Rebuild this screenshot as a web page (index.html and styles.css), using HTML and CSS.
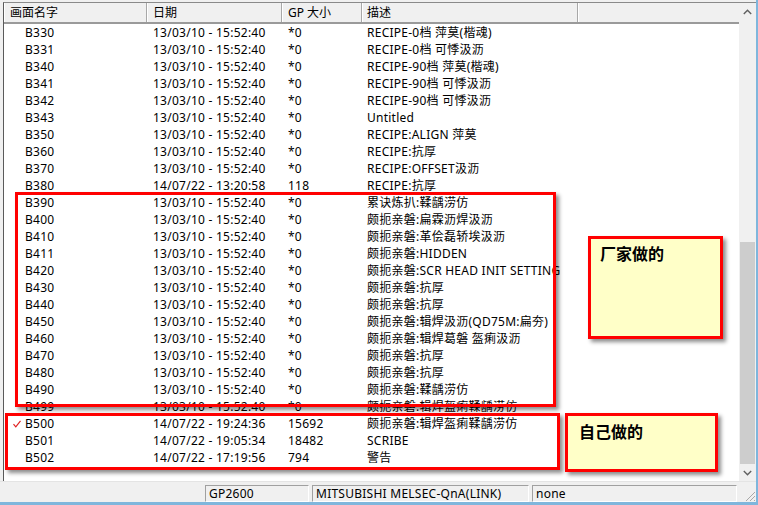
FILE: index.html
```html
<!DOCTYPE html>
<html lang="zh-CN">

<head>
    <meta charset="UTF-8">
    <title>画面列表</title>
    <link rel="stylesheet" href="styles.css">
</head>

<body>
    <div class="app">
        <div class="listbox">
            <div class="list">
                <div class="head">
                    <span>画面名字</span>
                    <span>日期</span>
                    <span>GP 大小</span>
                    <span>描述</span>
                    <span></span>
                </div>
                <div class="row"><span class="name">B330</span><span>13/03/10 - 15:52:40</span><span>*0</span><span class="desc">RECIPE-0档 萍莫(楷魂)</span></div>
                <div class="row"><span class="name">B331</span><span>13/03/10 - 15:52:40</span><span>*0</span><span class="desc">RECIPE-0档 可悸汲沥</span></div>
                <div class="row"><span class="name">B340</span><span>13/03/10 - 15:52:40</span><span>*0</span><span class="desc">RECIPE-90档 萍莫(楷魂)</span></div>
                <div class="row"><span class="name">B341</span><span>13/03/10 - 15:52:40</span><span>*0</span><span class="desc">RECIPE-90档 可悸汲沥</span></div>
                <div class="row"><span class="name">B342</span><span>13/03/10 - 15:52:40</span><span>*0</span><span class="desc">RECIPE-90档 可悸汲沥</span></div>
                <div class="row"><span class="name">B343</span><span>13/03/10 - 15:52:40</span><span>*0</span><span class="desc">Untitled</span></div>
                <div class="row"><span class="name">B350</span><span>13/03/10 - 15:52:40</span><span>*0</span><span class="desc">RECIPE:ALIGN 萍莫</span></div>
                <div class="row"><span class="name">B360</span><span>13/03/10 - 15:52:40</span><span>*0</span><span class="desc">RECIPE:抗厚</span></div>
                <div class="row"><span class="name">B370</span><span>13/03/10 - 15:52:40</span><span>*0</span><span class="desc">RECIPE:OFFSET汲沥</span></div>
                <div class="row"><span class="name">B380</span><span>14/07/22 - 13:20:58</span><span>118</span><span class="desc">RECIPE:抗厚</span></div>
                <div class="row"><span class="name">B390</span><span>13/03/10 - 15:52:40</span><span>*0</span><span class="desc">累诀炼扒:鞣龋涝仿</span></div>
                <div class="row"><span class="name">B400</span><span>13/03/10 - 15:52:40</span><span>*0</span><span class="desc">颇扼亲磐:扁霖沥焊汲沥</span></div>
                <div class="row"><span class="name">B410</span><span>13/03/10 - 15:52:40</span><span>*0</span><span class="desc">颇扼亲磐:革侩磊轿埃汲沥</span></div>
                <div class="row"><span class="name">B411</span><span>13/03/10 - 15:52:40</span><span>*0</span><span class="desc">颇扼亲磐:HIDDEN</span></div>
                <div class="row"><span class="name">B420</span><span>13/03/10 - 15:52:40</span><span>*0</span><span class="desc">颇扼亲磐:SCR HEAD INIT SETTING</span></div>
                <div class="row"><span class="name">B430</span><span>13/03/10 - 15:52:40</span><span>*0</span><span class="desc">颇扼亲磐:抗厚</span></div>
                <div class="row"><span class="name">B440</span><span>13/03/10 - 15:52:40</span><span>*0</span><span class="desc">颇扼亲磐:抗厚</span></div>
                <div class="row"><span class="name">B450</span><span>13/03/10 - 15:52:40</span><span>*0</span><span class="desc">颇扼亲磐:辑焊汲沥(QD75M:扁夯)</span></div>
                <div class="row"><span class="name">B460</span><span>13/03/10 - 15:52:40</span><span>*0</span><span class="desc">颇扼亲磐:辑焊葛磐 盔痢汲沥</span></div>
                <div class="row"><span class="name">B470</span><span>13/03/10 - 15:52:40</span><span>*0</span><span class="desc">颇扼亲磐:抗厚</span></div>
                <div class="row"><span class="name">B480</span><span>13/03/10 - 15:52:40</span><span>*0</span><span class="desc">颇扼亲磐:抗厚</span></div>
                <div class="row"><span class="name">B490</span><span>13/03/10 - 15:52:40</span><span>*0</span><span class="desc">颇扼亲磐:鞣龋涝仿</span></div>
                <div class="row"><span class="name">B499</span><span>13/03/10 - 15:52:40</span><span>*0</span><span class="desc">颇扼亲磐:辑焊盔痢鞣龋涝仿</span></div>
                <div class="row"><span class="name">
                        <svg class="check" width="8" height="8" viewBox="0 0 8 8"><path d="M0.5 4.2 L2.8 6.8 L7.5 0.8" fill="none" stroke="#e02020" stroke-width="1.2"/></svg>B500</span><span>14/07/22 - 19:24:36</span><span>15692</span><span class="desc">颇扼亲磐:辑焊盔痢鞣龋涝仿</span></div>
                <div class="row"><span class="name">B501</span><span>14/07/22 - 19:05:34</span><span>18482</span><span class="desc">SCRIBE</span></div>
                <div class="row"><span class="name">B502</span><span>14/07/22 - 17:19:56</span><span>794</span><span class="desc">警告</span></div>
            </div>
            <div class="scrollbar">
                <div class="sbtn">
                    <svg width="9" height="6" viewBox="0 0 9 6"><path d="M0.8 5 L4.5 1.3 L8.2 5" fill="none" stroke="#606060" stroke-width="1.4"/></svg>
                </div>
                <div class="track"><div class="thumb"></div></div>
                <div class="sbtn">
                    <svg width="9" height="6" viewBox="0 0 9 6"><path d="M0.8 1 L4.5 4.7 L8.2 1" fill="none" stroke="#606060" stroke-width="1.4"/></svg>
                </div>
            </div>
        </div>
        <div class="status">
            <div class="panel p1">GP2600</div>
            <div class="panel p2">MITSUBISHI MELSEC-QnA(LINK)</div>
            <div class="panel p3">none</div>
            <div class="grip">
                <svg width="12" height="12" viewBox="0 0 12 12">
                    <path d="M11 2 L2 11 M11 6 L6 11 M11 10 L10 11" stroke="#a8a8a8" stroke-width="1"/>
                </svg>
            </div>
        </div>

        <!-- annotations -->
        <div class="mark mark1"></div>
        <div class="mark mark2"></div>
        <div class="note note1">厂家做的</div>
        <div class="note note2">自己做的</div>
    </div>
</body>

</html>
```

FILE: styles.css
```css
body {
    margin: 0;
    font-family: "Noto Sans", "Noto Sans CJK SC", sans-serif;
    font-size: 12px;
    color: #000;
}

.app {
    position: relative;
    width: 756px;
    height: 502px;
    background: #f0f0f0;
    border-right: 2px solid #7fb6dc;
    border-bottom: 3px solid #7fb6dc;
    display: flex;
    flex-direction: column;
    overflow: hidden;
}

.listbox {
    margin: 2px 0 0 3px;
    height: 478px;
    border-top: 1px solid #8a8a8a;
    border-left: 1px solid #5a5a5a;
    display: flex;
    background: #fff;
}

.list {
    flex: 1;
    overflow: hidden;
}

.head {
    display: grid;
    grid-template-columns: 143px 135px 80px 216px 1fr;
    height: 19px;
    background: #f0f0f0;
    border-bottom: 2px solid #9a9a9a;
}

.head span {
    line-height: 19px;
    padding-left: 6px;
    border-right: 1px solid #a8a8a8;
    box-shadow: inset 1px 0 0 #fff;
    white-space: nowrap;
}

.head span:nth-child(4) {
    padding-left: 5px;
}

.head span:last-child {
    border-right: none;
}

.row {
    display: grid;
    grid-template-columns: 143px 135px 80px 1fr;
    height: 17px;
    line-height: 17px;
    white-space: nowrap;
    letter-spacing: 0.25px;
}

.row span {
    padding-left: 6px;
}

.row .name {
    position: relative;
    padding-left: 21px;
}

.row .desc {
    padding-left: 5px;
}

.check {
    position: absolute;
    left: 9px;
    top: 5px;
}

.scrollbar {
    width: 17px;
    background: #f0f0f0;
    display: flex;
    flex-direction: column;
}

.sbtn {
    height: 17px;
    display: flex;
    align-items: center;
    justify-content: center;
}

.track {
    flex: 1;
    display: flex;
    flex-direction: column;
}

.thumb {
    margin: auto 1px 0 1px;
    height: 222px;
    background: #cdcdcd;
}

.status {
    flex: 1;
    display: flex;
    justify-content: flex-end;
    align-items: center;
    gap: 3px;
    padding-top: 2px;
    border-top: 1px solid #e4e4e4;
    letter-spacing: 0.25px;
}

.panel {
    height: 15px;
    line-height: 15px;
    padding-left: 3px;
    border-top: 1px solid #a0a0a0;
    border-left: 1px solid #a0a0a0;
    border-right: 1px solid #fff;
    border-bottom: 1px solid #fff;
    white-space: nowrap;
}

.p1 {
    width: 99px;
}

.p2 {
    width: 212px;
}

.p3 {
    width: 200px;
}

.grip {
    width: 16px;
    height: 17px;
    display: flex;
    align-items: flex-end;
    justify-content: flex-end;
}

.mark {
    position: absolute;
    border: 3px solid #ff0000;
    box-shadow: 3px 3px 4px rgba(0, 0, 0, 0.45);
}

.mark1 {
    left: 15px;
    top: 192px;
    width: 535px;
    height: 209px;
}

.mark2 {
    left: 5px;
    top: 413px;
    width: 549px;
    height: 51px;
}

.note {
    position: absolute;
    background: #ffffc8;
    border: 3px solid #ff0000;
    box-shadow: 3px 3px 4px rgba(0, 0, 0, 0.45);
    font-size: 16px;
    font-weight: bold;
    line-height: 22px;
}

.note1 {
    left: 588px;
    top: 236px;
    width: 120px;
    height: 93px;
    padding: 4px 0 0 9px;
}

.note2 {
    left: 565px;
    top: 413px;
    width: 136px;
    height: 48px;
    padding: 5px 0 0 11px;
}
```
